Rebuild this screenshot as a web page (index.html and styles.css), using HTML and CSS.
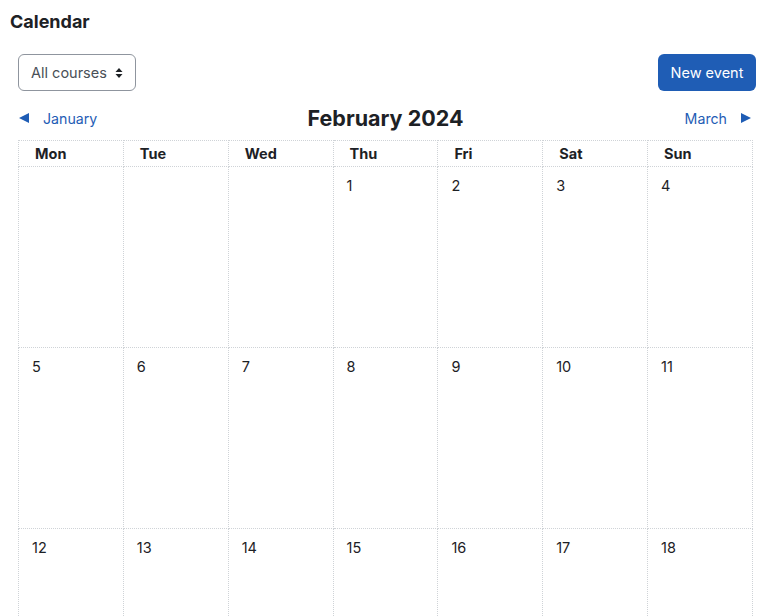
FILE: index.html
```html
<!DOCTYPE html>
<html>
<head>
<meta charset="utf-8">
<link rel="stylesheet" href="styles.css">
</head>
<body>
<div class="page">
  <h2 class="title">Calendar</h2>
  <div class="toolbar">
    <div class="select">All courses <span class="caret"><svg width="8" height="12" viewBox="0 0 8 12"><path d="M4 1 L7.5 5 H0.5 Z M4 11 L7.5 7 H0.5 Z" fill="#1d2125"/></svg></span></div>
    <button class="btn">New event</button>
  </div>
  <div class="nav">
    <a class="prev"><svg width="10" height="10" viewBox="0 0 10 10"><path d="M0 5 L10 0 V10 Z" fill="#1f5db5"/></svg><span>January</span></a>
    <h3 class="month">February 2024</h3>
    <a class="next"><span>March</span><svg width="10" height="10" viewBox="0 0 10 10"><path d="M10 5 L0 0 V10 Z" fill="#1f5db5"/></svg></a>
  </div>
  <table class="cal">
    <thead>
      <tr><th>Mon</th><th>Tue</th><th>Wed</th><th>Thu</th><th>Fri</th><th>Sat</th><th>Sun</th></tr>
    </thead>
    <tbody>
      <tr class="r1"><td></td><td></td><td></td><td>1</td><td>2</td><td>3</td><td>4</td></tr>
      <tr><td>5</td><td>6</td><td>7</td><td>8</td><td>9</td><td>10</td><td>11</td></tr>
      <tr><td>12</td><td>13</td><td>14</td><td>15</td><td>16</td><td>17</td><td>18</td></tr>
    </tbody>
  </table>
</div>
</body>
</html>
```
FILE: styles.css
```css
html, body { margin: 0; padding: 0; background: #fff; }
body { font-family: Inter, "Liberation Sans", sans-serif; color: #1d2125; }
.page { padding: 0 0 0 10px; width: 746px; overflow: hidden; height: 616px; }
.title { margin: 0; padding-top: 11px; font-size: 18px; font-weight: 700; line-height: 22px; height: 32px; }
.toolbar { display: flex; justify-content: space-between; align-items: center; padding-left: 8px; margin-top: 11px; }
.select { box-sizing: border-box; height: 37px; width: 118px; border: 1px solid #8f959e; border-radius: 6px; font-size: 14.5px; color: #495057; display: flex; align-items: center; padding-left: 12px; gap: 8px; }
.caret { display: flex; }
.btn { box-sizing: border-box; height: 37px; width: 98px; background: #1f5db5; color: #fff; border: none; border-radius: 6px; font-family: inherit; font-size: 14.5px; padding: 0; }
.nav { display: grid; grid-template-columns: 1fr auto 1fr; align-items: center; padding-left: 9px; margin-top: 12px; height: 30px; }
.nav a { color: #1f5db5; font-size: 14.2px; display: flex; align-items: center; }
.next { justify-self: end; padding-right: 5px; }
.prev span { margin-left: 14px; }
.next span { margin-right: 14px; }
.month { margin: 0 4px 0 0; font-size: 21.5px; font-weight: 700; }
.cal { border-collapse: collapse; margin-left: 8px; margin-top: 7px; table-layout: fixed; width: 735px; }
.cal th, .cal td { border: 1px dotted #cfd3d7; box-sizing: border-box; }
.cal th { height: 26px; text-align: left; padding: 0 0 0 16px; font-size: 14.5px; font-weight: 700; vertical-align: middle; }
.cal td { height: 181px; vertical-align: top; padding: 10px 0 0 13px; font-size: 14.5px; color: #1d2125; }
.cal .r1 td { height: 181px; }
```
